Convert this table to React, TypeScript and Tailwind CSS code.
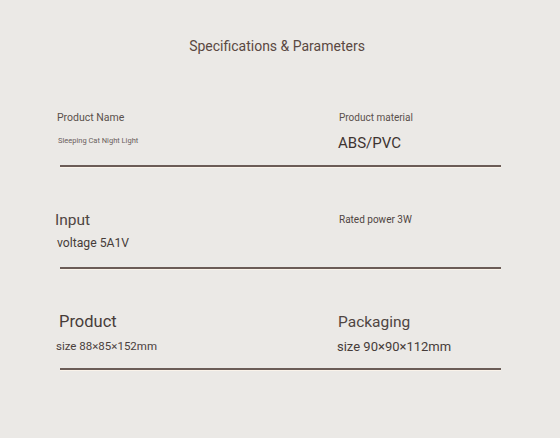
const font = { fontFamily: 'Roboto, "Liberation Sans", sans-serif' };

function Divider() {
  return (
    <div className="ml-[60px] w-[441px] h-[2px] bg-[#6b5c57] shadow-[0_1px_0_#faf3ea]" />
  );
}

function App() {
  return (
    <div className="h-[438px] w-full bg-[#ebe9e6] overflow-hidden" style={font}>
      {/* Title */}
      <div className="pt-[36px] pr-[6px] h-[56px] text-center text-[14px] leading-[20px] text-[#5a4842]">
        Specifications &amp; Parameters
      </div>

      {/* Row 1 */}
      <div className="mt-[52px] ml-[57px] h-[57px] grid grid-cols-[281px_1fr]">
        <div className="flex flex-col">
          <div className="h-[20px] leading-[20px] text-[10.5px] text-[#5a504c]">Product Name</div>
          <div className="mt-[3px] ml-[1px] h-[20px] leading-[20px] text-[7.5px] text-[#6a605c]">
            Sleeping Cat Night Light
          </div>
        </div>
        <div className="flex flex-col">
          <div className="ml-[1px] h-[20px] leading-[20px] text-[10px] text-[#5a504c]">Product material</div>
          <div className="mt-[5px] h-[20px] leading-[20px] text-[15px] text-[#3e3431]">ABS/PVC</div>
        </div>
      </div>
      <Divider />

      {/* Row 2 */}
      <div className="mt-[43px] ml-[57px] h-[57px] grid grid-cols-[281px_1fr]">
        <div className="flex flex-col">
          <div className="-ml-[2px] h-[20px] leading-[20px] text-[15.5px] text-[#4f4542]">Input</div>
          <div className="mt-[3px] h-[20px] leading-[20px] text-[12.2px] text-[#463c39]">voltage 5A1V</div>
        </div>
        <div className="flex flex-col">
          <div className="ml-[1px] h-[20px] leading-[20px] text-[10px] text-[#4f4542]">Rated power 3W</div>
        </div>
      </div>
      <Divider />

      {/* Row 3 */}
      <div className="mt-[43px] ml-[57px] h-[56px] grid grid-cols-[281px_1fr]">
        <div className="flex flex-col">
          <div className="ml-[2px] h-[20px] leading-[20px] text-[16.5px] text-[#463c39]">Product</div>
          <div className="mt-[4px] -ml-[1px] h-[20px] leading-[20px] text-[11.5px] text-[#4a403d]">
            size 88×85×152mm
          </div>
        </div>
        <div className="flex flex-col">
          <div className="h-[20px] leading-[20px] text-[15.5px] text-[#4f4542]">Packaging</div>
          <div className="mt-[5px] -ml-[1px] h-[20px] leading-[20px] text-[13px] text-[#463c39]">
            size 90×90×112mm
          </div>
        </div>
      </div>
      <Divider />
    </div>
  );
}

export default App;
